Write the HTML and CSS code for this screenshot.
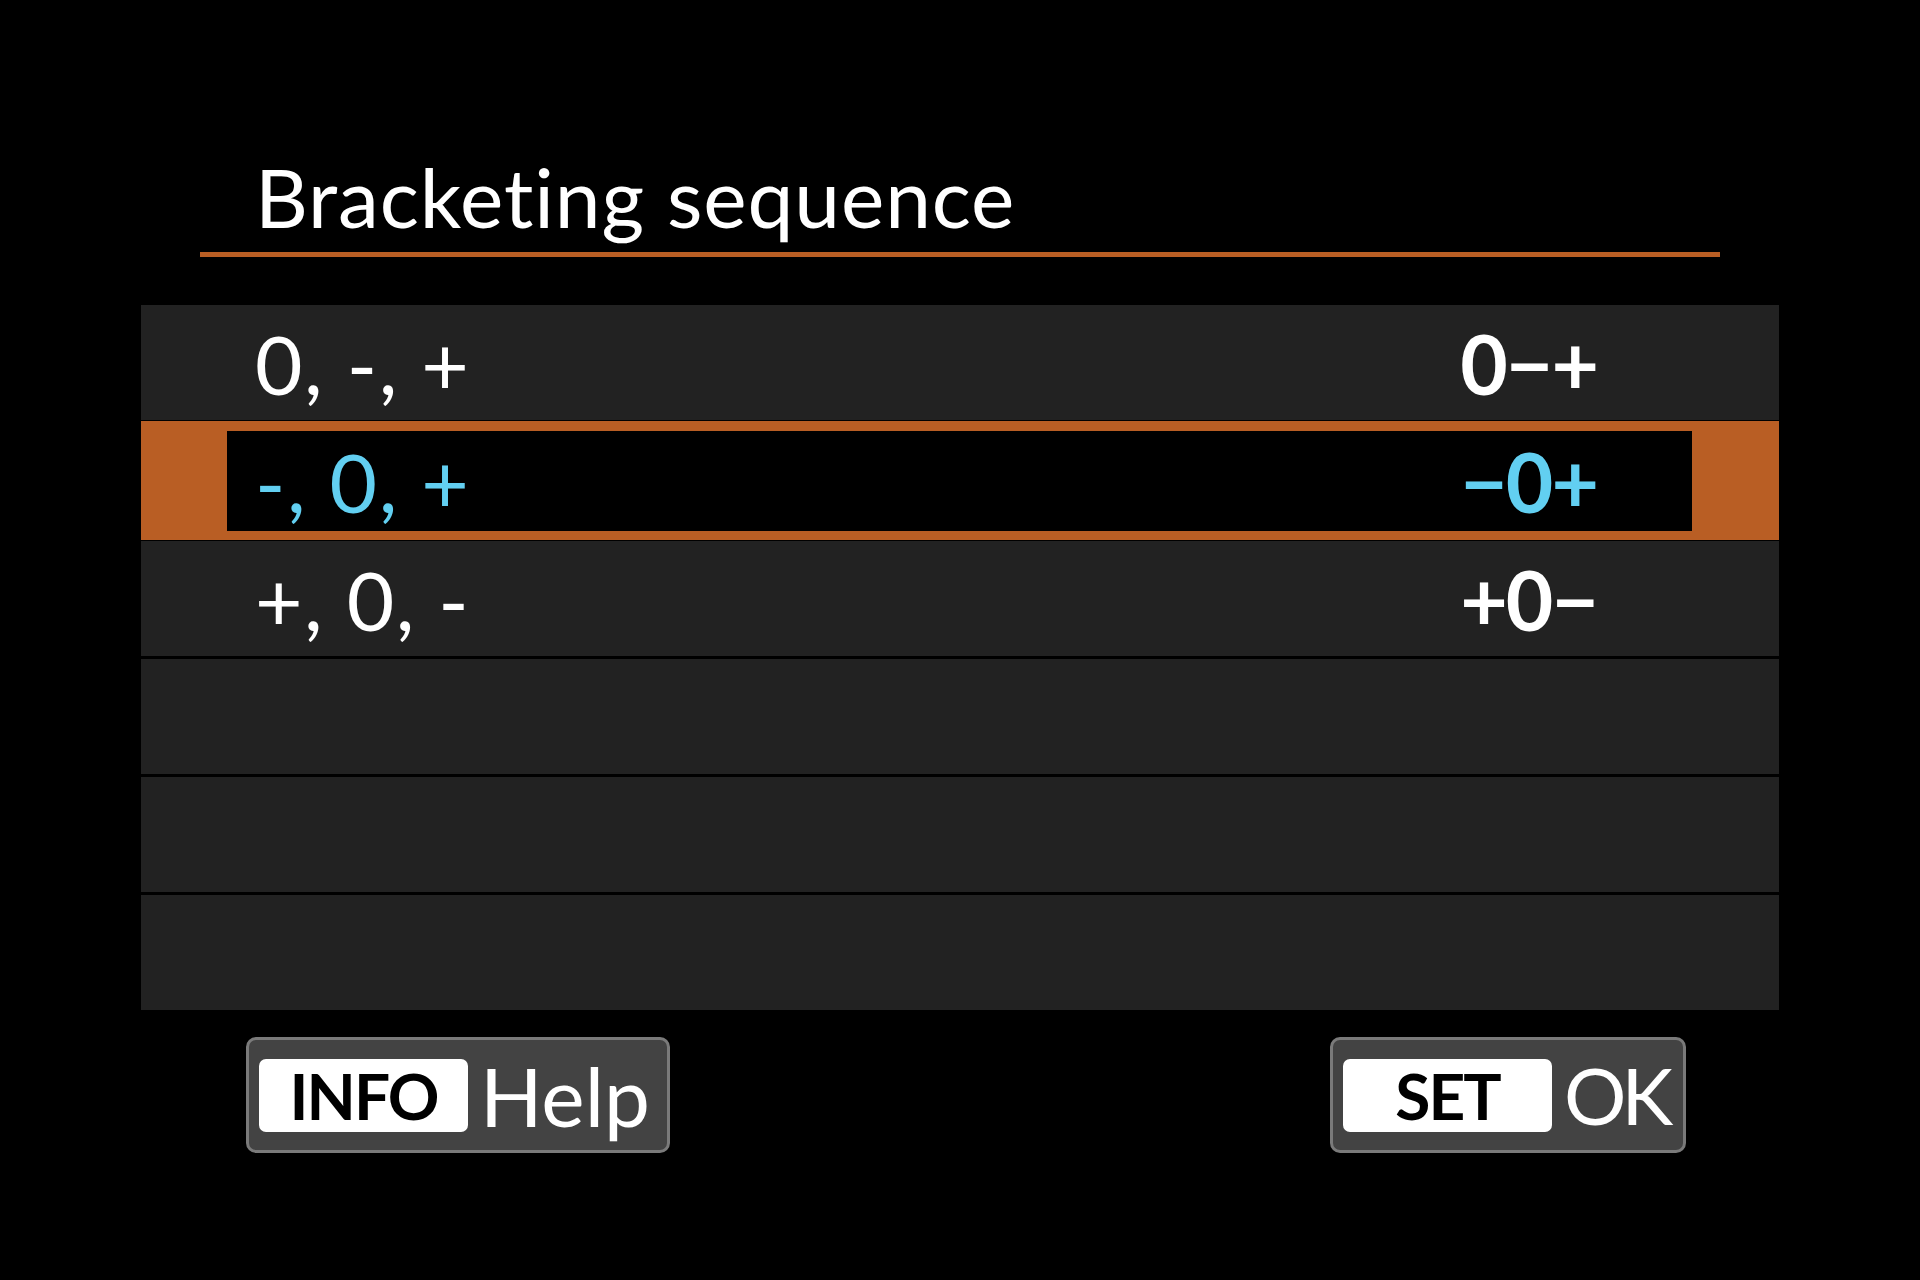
FILE: index.html
```html
<!DOCTYPE html>
<html lang="en">
<head>
    <meta charset="UTF-8">
    <meta name="viewport" content="width=device-width, initial-scale=1.0">
    <title>Bracketing sequence</title>
    <link rel="stylesheet" href="styles.css">
</head>
<body>

    <div class="screen">
        <div class="header">
            <h1 class="title">Bracketing sequence</h1>
        </div>

        <ul class="menu">
            <li class="item">
                <span class="label">0, -, +</span>
                <span class="value">0&minus;+</span>
            </li>
            <li class="item selected">
                <span class="label">-, 0, +</span>
                <span class="value">&minus;0+</span>
            </li>
            <li class="item">
                <span class="label">+, 0, -</span>
                <span class="value">+0&minus;</span>
            </li>
            <li class="item"></li>
            <li class="item"></li>
            <li class="item"></li>
        </ul>

        <div class="footer">
            <div class="btn btn-info">
                <span class="key">INFO</span>
                <span class="action">Help</span>
            </div>
            <div class="btn btn-set">
                <span class="key">SET</span>
                <span class="action">OK</span>
            </div>
        </div>
    </div>

</body>
</html>
```

FILE: styles.css
```css
/* Page */
body {
    margin: 0;
    height: 1280px;
    background-color: #000;
    color: #fff;
    font-family: "Lato", "Noto Sans", sans-serif;
    font-variant-ligatures: none;
}

.screen {
    width: 1638px;
    margin: 0 auto;
}

/* Title */
.header {
    width: 1520px;
    margin: 146px auto 0;
    border-bottom: 5px solid #b95e24;
}

.title {
    margin: 0;
    padding: 0 0 6px 55px;
    font-size: 82px;
    font-weight: 400;
    line-height: 100px;
    letter-spacing: 0.9px;
}

/* Menu list */
.menu {
    list-style: none;
    margin: 48px 0 0;
    padding: 0;
    display: flex;
    flex-direction: column;
    gap: 3px;
}

.menu .item {
    box-sizing: border-box;
    height: 115px;
    padding: 0 182px 0 114px;
    display: flex;
    align-items: center;
    justify-content: space-between;
    background-color: #222;
    font-size: 82px;
    line-height: 1;
}

.menu .item.selected {
    height: 119px;
    margin: -2px 0;
    padding: 0 95px 0 28px;
    background-color: #000;
    border-style: solid;
    border-color: #b95e24;
    border-width: 10px 87px 9px 86px;
    color: #62cff1;
}

.menu .label {
    letter-spacing: 1.5px;
}

.menu .value {
    font-weight: 700;
    letter-spacing: -2px;
}

/* Bottom buttons */
.footer {
    margin-top: 27px;
    padding: 0 93px 0 105px;
    display: flex;
    justify-content: space-between;
}

.btn {
    box-sizing: border-box;
    height: 116px;
    padding: 0 10px;
    display: flex;
    align-items: center;
    gap: 12px;
    background-color: #434343;
    border: 3px solid #7a7a7a;
    border-radius: 10px;
}

.btn-info {
    width: 424px;
}

.btn-set {
    width: 356px;
}

.btn .key {
    flex: none;
    width: 209px;
    height: 73px;
    display: flex;
    align-items: center;
    justify-content: center;
    background-color: #fff;
    border-radius: 7px;
    color: #000;
    font-size: 64px;
    font-weight: 700;
    letter-spacing: -2px;
}

.btn .action {
    font-size: 82px;
    line-height: 1;
}

.btn-set .action {
    font-size: 78px;
    letter-spacing: -5px;
}
```
